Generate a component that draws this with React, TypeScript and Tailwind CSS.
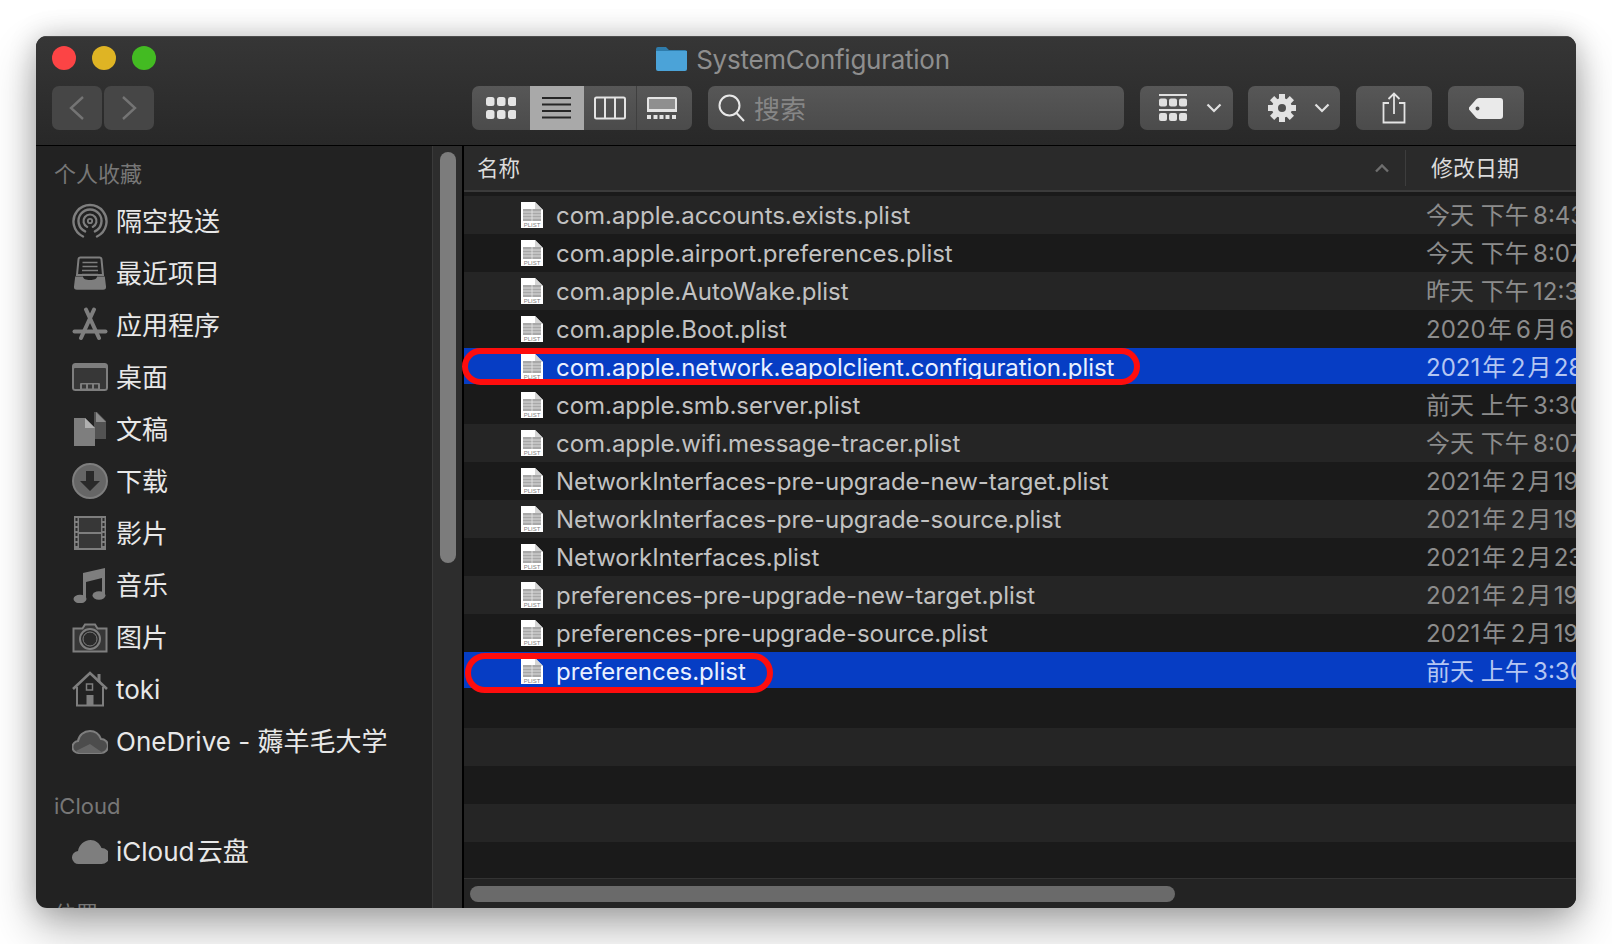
import React from 'react';

const GRAY = '#7e7e7e';

const AirDropIcon = () => (
  <svg width="36" height="36" viewBox="0 0 36 36" fill="none" stroke={GRAY} strokeLinecap="round">
    <path d="M11 33.500A16.500 16.500 0 1 1 25 33.500" strokeWidth="2.400" />
    <path d="M13.100 28.400A11.500 11.500 0 1 1 22.900 28.400" strokeWidth="2.400" />
    <path d="M15.250 23.900A6.500 6.500 0 1 1 20.750 23.900" strokeWidth="2.200" />
    <circle cx="18" cy="18" r="2.200" strokeWidth="1.800" />
  </svg>
);

const RecentsIcon = () => (
  <svg width="36" height="36" viewBox="0 0 36 36" fill="none">
    <path d="M8.500 2.500h19a2 2 0 0 1 2 1.800L31 20H5L6.500 4.300a2 2 0 0 1 2-1.800z" stroke={GRAY} strokeWidth="2" />
    <path d="M10.500 7.500h15M10.500 11.500h15M10 15.500h16M10 19.500h16" stroke={GRAY} strokeWidth="1.600" />
    <path d="M3.200 21.500H11c0 2.500 3 3.500 7 3.500s7-1 7-3.500h7.800l1.200 10a3 3 0 0 1-3 3.300H5a3 3 0 0 1-3-3.300z" fill={GRAY} />
  </svg>
);

const AppsIcon = () => (
  <svg width="36" height="36" viewBox="0 0 36 36" fill="none" stroke={GRAY} strokeLinecap="round">
    <path d="M14 2.500L27 31M22 2.500L9 31" strokeWidth="4" />
    <path d="M2.500 24.500H33.500" strokeWidth="4" />
  </svg>
);

const DesktopIcon = () => (
  <svg width="36" height="36" viewBox="0 0 36 36">
    <rect x="0" y="4" width="36" height="28" rx="3.500" fill={GRAY} />
    <rect x="2" y="9" width="32" height="21" rx="1" fill="#373737" />
    <rect x="8" y="24" width="20" height="7" rx="1" fill={GRAY} />
    <rect x="10" y="25.500" width="4" height="4" fill="#373737" />
    <rect x="16" y="25.500" width="4" height="4" fill="#373737" />
    <rect x="22" y="25.500" width="4" height="4" fill="#373737" />
  </svg>
);

const DocsIcon = () => (
  <svg width="36" height="36" viewBox="0 0 36 36">
    <path d="M12 1h10v27h12V10l-9-9z" fill="#525252" />
    <path d="M24 1l10 10H24z" fill="#8a8a8a" />
    <path d="M2 7h11l10 10v18H2z" fill={GRAY} />
    <path d="M13 7v10h10z" fill="#b0b0b0" />
  </svg>
);

const DownloadIcon = () => (
  <svg width="36" height="36" viewBox="0 0 36 36">
    <circle cx="18" cy="18" r="17" fill="#666666" stroke={GRAY} strokeWidth="2" />
    <path d="M14 8h8v10h6L18 28 8 18h6z" fill="#2a2a2a" />
  </svg>
);

const MoviesIcon = () => (
  <svg width="36" height="36" viewBox="0 0 36 36">
    <rect x="2" y="1" width="32" height="34" fill={GRAY} />
    <rect x="7" y="3" width="22" height="14" fill="#373737" />
    <rect x="7" y="19" width="22" height="14" fill="#373737" />
    {[3, 8, 13, 18, 23, 28].map((y) => (
      <React.Fragment key={y}>
        <rect x="3.500" y={y} width="2" height="3" fill="#2a2a2a" />
        <rect x="30.500" y={y} width="2" height="3" fill="#2a2a2a" />
      </React.Fragment>
    ))}
  </svg>
);

const MusicIcon = () => (
  <svg width="36" height="36" viewBox="0 0 36 36" fill={GRAY}>
    <path d="M11 8.500L33 3v26h-3V11L14 15v18h-3z" />
    <ellipse cx="8" cy="32" rx="6.500" ry="4.200" />
    <ellipse cx="27" cy="28.500" rx="6.500" ry="4.200" />
    <path d="M11 6l22-5v7L11 13z" />
  </svg>
);

const CameraIcon = () => (
  <svg width="36" height="36" viewBox="0 0 36 36" fill="none" stroke={GRAY}>
    <path d="M1.500 9.500h9l2.500-4h10l2.500 4h9v23h-33z" strokeWidth="2" fill="#373737" />
    <circle cx="18" cy="20" r="10" strokeWidth="2" fill="#2a2a2a" />
    <circle cx="18" cy="20" r="7" strokeWidth="1" />
  </svg>
);

const HomeIcon = () => (
  <svg width="36" height="36" viewBox="0 0 36 36" fill="none" stroke={GRAY}>
    <path d="M1 18L18 2l17 16" strokeWidth="2.600" />
    <path d="M5 16v18.500h26V16" strokeWidth="2" />
    <path d="M27 3v8" strokeWidth="3" />
    <rect x="14.500" y="13" width="6" height="6" strokeWidth="1.500" />
    <rect x="14.500" y="24" width="7" height="10" fill={GRAY} stroke="none" />
  </svg>
);

const OneDriveIcon = () => (
  <svg width="36" height="36" viewBox="0 0 36 36">
    <path d="M7 30a6 6 0 0 1-1-12c1-6 6-10 12-10 5 0 9 3 11 8a7 7 0 0 1 0 14z" fill="#4c4c4c" stroke={GRAY} strokeWidth="2" />
    <path d="M4 28l14-7 13 9H7z" fill="#666666" />
  </svg>
);

const CloudIcon = () => (
  <svg width="36" height="36" viewBox="0 0 36 36">
    <path d="M7 31a6.500 6.500 0 0 1-1-13c1-6 6-11 12.500-11 5 0 9 3 11 8a8 8 0 0 1 0 16z" fill={GRAY} />
  </svg>
);

const GearIcon = () => (
  <svg width="30" height="30" viewBox="0 0 30 30" fill="#e2e2e2">
    <circle cx="15" cy="15" r="10" />
    {[0, 45, 90, 135, 180, 225, 270, 315].map((a) => (
      <rect key={a} x="12" y="1" width="6" height="7" transform={`rotate(${a} 15 15)`} />
    ))}
    <circle cx="15" cy="15" r="4" fill="#505050" />
  </svg>
);

const PlistIcon = () => (
  <svg width="22" height="26" viewBox="0 0 22 26" className="shrink-0">
    <path d="M0 0h14l8 8v18H0z" fill="#ffffff" />
    <path d="M14 0l8 8h-8z" fill="#d5d5d5" />
    <rect x="2" y="7" width="18" height="12" fill="#a8a8a8" />
    <path d="M2 10h18M2 13h18M2 16h18M11 7v12" stroke="#e8e8e8" strokeWidth="0.800" />
    <text x="11" y="25" textAnchor="middle" fontSize="6" fill="#808080" fontFamily="Liberation Sans, sans-serif">PLIST</text>
  </svg>
);

const favorites = [
  { label: '隔空投送', icon: <AirDropIcon /> },
  { label: '最近项目', icon: <RecentsIcon /> },
  { label: '应用程序', icon: <AppsIcon /> },
  { label: '桌面', icon: <DesktopIcon /> },
  { label: '文稿', icon: <DocsIcon /> },
  { label: '下载', icon: <DownloadIcon /> },
  { label: '影片', icon: <MoviesIcon /> },
  { label: '音乐', icon: <MusicIcon /> },
  { label: '图片', icon: <CameraIcon /> },
  { label: 'toki', icon: <HomeIcon /> },
  { label: 'OneDrive - 薅羊毛大学', icon: <OneDriveIcon /> },
];

// hair spaces between digits and CJK, the way Finder spaces dates
const files = [
  { name: 'com.apple.accounts.exists.plist', date: '今天 下午\u20098:43' },
  { name: 'com.apple.airport.preferences.plist', date: '今天 下午\u20098:07' },
  { name: 'com.apple.AutoWake.plist', date: '昨天 下午\u200912:30' },
  { name: 'com.apple.Boot.plist', date: '2020\u200a年\u20096\u200a月\u200a6\u200a日' },
  { name: 'com.apple.network.eapolclient.configuration.plist', date: '2021\u200a年\u20092\u200a月\u200a28\u200a日', selected: true },
  { name: 'com.apple.smb.server.plist', date: '前天 上午\u20093:30' },
  { name: 'com.apple.wifi.message-tracer.plist', date: '今天 下午\u20098:07' },
  { name: 'NetworkInterfaces-pre-upgrade-new-target.plist', date: '2021\u200a年\u20092\u200a月\u200a19\u200a日' },
  { name: 'NetworkInterfaces-pre-upgrade-source.plist', date: '2021\u200a年\u20092\u200a月\u200a19\u200a日' },
  { name: 'NetworkInterfaces.plist', date: '2021\u200a年\u20092\u200a月\u200a23\u200a日' },
  { name: 'preferences-pre-upgrade-new-target.plist', date: '2021\u200a年\u20092\u200a月\u200a19\u200a日' },
  { name: 'preferences-pre-upgrade-source.plist', date: '2021\u200a年\u20092\u200a月\u200a19\u200a日' },
  { name: 'preferences.plist', date: '前天 上午\u20093:30', selected: true },
];

const SidebarItem: React.FC<{ label: string; icon: React.ReactNode }> = ({ label, icon }) => (
  <div className="h-[52px] flex items-center pl-[36px] shrink-0">
    <span className="w-[36px] h-[36px] shrink-0">{icon}</span>
    <span className="ml-[8px] text-[26px] text-[#e8e8e8] whitespace-nowrap">{label}</span>
  </div>
);

const FileRow: React.FC<{ name: string; date: string; selected?: boolean; index: number }> = ({ name, date, selected, index }) => {
  const stripe = index % 2 === 0 ? 'bg-[#252525]' : 'bg-[#1a1a1a]';
  return (
    <div className={`relative h-[38px] shrink-0 ${selected ? 'bg-[#1a1a1a]' : stripe}`}>
      <div className={`flex items-center ${selected ? 'h-[36px] pt-[2px] bg-[#063dc4]' : 'h-[38px]'}`}>
        <div className="flex-1 flex items-center pl-[57px] min-w-0">
          <PlistIcon />
          <span className={`ml-[13px] mt-[2px] text-[24px] tracking-[-0.04px] whitespace-nowrap ${selected ? 'text-[#eaf0ff]' : 'text-[#c2c2c2]'}`}>{name}</span>
        </div>
        <div className={`w-[150px] mt-[2px] overflow-hidden whitespace-nowrap text-[24px] ${selected ? 'text-[#b4c6f2]' : 'text-[#8c8c8c]'}`}>{date}</div>
      </div>
      {index === 4 && <div className="absolute z-10 left-[-2px] top-0 w-[678px] h-[37px] rounded-full border-[6px] border-[#fe0d0d]" />}
      {index === 12 && <div className="absolute z-10 left-[1px] top-[1px] w-[308px] h-[40px] rounded-full border-[6px] border-[#fe0d0d]" />}
    </div>
  );
};

const ToolButton: React.FC<{ className: string; children: React.ReactNode }> = ({ className, children }) => (
  <div className={`h-[44px] rounded-[7px] flex items-center justify-center shrink-0 ${className}`}>
    {children}
  </div>
);

const Chevron = () => (
  <svg width="16" height="10" viewBox="0 0 16 10" fill="none" stroke="#e0e0e0" strokeWidth="2.200"><path d="M1.500 1.500L8 8l6.500-6.500" /></svg>
);

export default function App() {
  return (
    <div className="w-[1612px] h-[944px] bg-white pl-[36px] pt-[36px] overflow-hidden font-['Inter','Noto_Sans_CJK_SC',sans-serif]">
      <div className="w-[1540px] h-[872px] rounded-[11px] overflow-hidden flex flex-col bg-[#222222] shadow-[0_20px_45px_rgba(0,0,0,0.3),0_0_28px_rgba(0,0,0,0.2)]">
        {/* toolbar */}
        <div className="h-[110px] shrink-0 bg-gradient-to-b from-[#363636] to-[#282828] border-t border-t-[#4c4c4c] border-b border-b-black flex flex-col">
          <div className="h-[49px] relative flex items-center justify-center pr-[6px] pb-[5px]">
            <div className="absolute left-[16px] top-[9px] flex gap-[16px]">
              <span className="w-[24px] h-[24px] rounded-full bg-[#fc4445]" />
              <span className="w-[24px] h-[24px] rounded-full bg-[#dfb424]" />
              <span className="w-[24px] h-[24px] rounded-full bg-[#43bb22]" />
            </div>
            <svg width="31" height="25" viewBox="0 0 31 25" className="mt-[-2px]">
              <path d="M0 3a2 2 0 0 1 2-2h8l3 3h16a2 2 0 0 1 2 2v3H0z" fill="#2f7cab" />
              <path d="M0 5h31v18a2 2 0 0 1-2 2H2a2 2 0 0 1-2-2z" fill="#4ba3d8" />
            </svg>
            <span className="ml-[9px] text-[26px] tracking-[-0.26px] text-[#8e8e8e]">SystemConfiguration</span>
          </div>
          <div className="h-[44px] flex pl-[16px]">
            <ToolButton className="w-[50px] bg-[#464646]">
              <svg width="16" height="26" viewBox="0 0 16 26" fill="none" stroke="#747474" strokeWidth="2.400"><path d="M14 2L2 13l12 11" /></svg>
            </ToolButton>
            <ToolButton className="w-[50px] ml-[2px] bg-[#464646]">
              <svg width="16" height="26" viewBox="0 0 16 26" fill="none" stroke="#747474" strokeWidth="2.400"><path d="M2 2l12 11L2 24" /></svg>
            </ToolButton>
            <div className="ml-[318px] w-[220px] h-[44px] rounded-[7px] overflow-hidden flex bg-gradient-to-b from-[#575757] to-[#4b4b4b] shrink-0">
              <div className="w-[58px] flex items-center justify-center">
                <svg width="30" height="24" viewBox="0 0 30 24" fill="#e4e4e4">
                  {[0, 11, 22].map((x) => (
                    <React.Fragment key={x}>
                      <rect x={x} y="1" width="8.500" height="9" rx="2.500" />
                      <rect x={x} y="14" width="8.500" height="9" rx="2.500" />
                    </React.Fragment>
                  ))}
                </svg>
              </div>
              <div className="w-[54px] bg-[#a9a9a9] flex items-center justify-center">
                <svg width="30" height="24" viewBox="0 0 30 24" fill="#262626">
                  <rect y="1" width="29" height="2" />
                  <rect y="7.500" width="29" height="2" />
                  <rect y="14" width="29" height="2" />
                  <rect y="20.500" width="29" height="2" />
                </svg>
              </div>
              <div className="w-[53px] border-r border-[#3f3f3f] flex items-center justify-center">
                <svg width="32" height="24" viewBox="0 0 32 24" fill="none" stroke="#e4e4e4" strokeWidth="2"><rect x="1" y="1.500" width="30" height="21" rx="1.500" /><path d="M11 2v20M21 2v20" /></svg>
              </div>
              <div className="flex-1 flex items-center justify-center pr-[5px]">
                <svg width="30" height="24" viewBox="0 0 30 24" fill="#e4e4e4">
                  <path d="M1.500 1h27a1.500 1.500 0 0 1 1.500 1.500V16H0V2.500A1.500 1.500 0 0 1 1.500 1z" />
                  <rect x="2" y="3" width="26" height="10" fill="#8f8f8f" />
                  {[0, 6.500, 12.500, 18.500, 25].map((x) => (<rect key={x} x={x} y="19" width="4" height="4" />))}
                </svg>
              </div>
            </div>
            <div className="ml-[16px] w-[416px] h-[44px] rounded-[7px] bg-gradient-to-b from-[#575757] to-[#4b4b4b] flex items-center pl-[10px] shrink-0">
              <svg width="27" height="28" viewBox="0 0 27 28" fill="none" stroke="#e8e8e8" strokeWidth="2"><circle cx="11.500" cy="11.500" r="10" /><path d="M18.500 19l7.500 8" /></svg>
              <span className="ml-[9px] mt-[2px] text-[26px] text-[#868686]">搜索</span>
            </div>
            <ToolButton className="w-[93px] ml-[16px] pl-[6px] bg-gradient-to-b from-[#575757] to-[#4b4b4b]">
              <svg width="32" height="28" viewBox="0 0 32 28" fill="#e0e0e0">
                <rect x="2" y="0" width="28" height="2" />
                <rect x="2" y="15" width="28" height="2" />
                {[2, 12, 22].map((x) => (
                  <React.Fragment key={x}>
                    <rect x={x} y="4.500" width="8" height="8" rx="2" />
                    <rect x={x} y="19" width="8" height="8" rx="2" />
                  </React.Fragment>
                ))}
              </svg>
              <span className="ml-[17px]"><Chevron /></span>
            </ToolButton>
            <ToolButton className="w-[92px] ml-[15px] pl-[8px] bg-gradient-to-b from-[#575757] to-[#4b4b4b]">
              <GearIcon />
              <span className="ml-[17px]"><Chevron /></span>
            </ToolButton>
            <ToolButton className="w-[76px] ml-[16px] bg-gradient-to-b from-[#575757] to-[#4b4b4b]">
              <svg width="24" height="32" viewBox="0 0 24 32" fill="none" stroke="#e4e4e4" strokeWidth="1.800"><path d="M7 11H1.500v19.500h21V11H17" /><path d="M12 22V2M6.500 7L12 1.500 17.500 7" /></svg>
            </ToolButton>
            <ToolButton className="w-[76px] ml-[16px] bg-gradient-to-b from-[#575757] to-[#4b4b4b]">
              <svg width="34" height="21" viewBox="0 0 34 21"><path fillRule="evenodd" fill="#eaeaea" d="M10 0h21a3 3 0 0 1 3 3v15a3 3 0 0 1-3 3H10a4 4 0 0 1-3-1.500L0 11.500a2 2 0 0 1 0-2L7 1.500A4 4 0 0 1 10 0zM8.500 8.500a2 2 0 1 0 0 4 2 2 0 0 0 0-4z" /></svg>
            </ToolButton>
          </div>
        </div>

        <div className="flex-1 min-h-0 flex">
          {/* sidebar */}
          <div className="w-[396px] shrink-0 overflow-hidden flex flex-col">
            <div className="mt-[14px] mb-[7px] ml-[18px] h-[28px] shrink-0 flex items-center text-[22px] text-[#777777]">个人收藏</div>
            {favorites.map((item) => (
              <SidebarItem key={item.label} label={item.label} icon={item.icon} />
            ))}
            <div className="mt-[25px] mb-[5px] ml-[18px] h-[28px] shrink-0 flex items-center text-[22px] text-[#777777]">iCloud</div>
            <SidebarItem label={'iCloud\u200a云盘'} icon={<CloudIcon />} />
            <div className="mt-[23px] ml-[18px] h-[28px] shrink-0 flex items-center text-[22px] text-[#777777]">位置</div>
          </div>
          <div className="w-[30px] shrink-0 bg-[#2d2d2d] border-l border-[#3a3a3a] pl-[7px] pt-[6px]">
            <div className="w-[16px] h-[411px] rounded-full bg-[#7c7c7c]" />
          </div>
          <div className="w-[2px] shrink-0 bg-black" />

          {/* file list */}
          <div className="flex-1 min-w-0 flex flex-col">
            <div className="h-[46px] shrink-0 flex items-center bg-[#2a2a2a] border-b-2 border-[#3b3b3b]">
              <span className="ml-[13px] text-[21.500px] text-[#dcdcdc]">名称</span>
              <svg width="16" height="10" viewBox="0 0 16 10" fill="none" stroke="#6e6e6e" strokeWidth="2.400" className="ml-auto"><path d="M2 8.500L8 2.500l6 6" /></svg>
              <span className="ml-[15px] w-px h-[36px] bg-[#3d3d3d]" />
              <span className="ml-[25px] w-[145px] text-[22px] text-[#dcdcdc] whitespace-nowrap">修改日期</span>
            </div>
            <div className="h-[4px] shrink-0 bg-[#1a1a1a]" />
            {files.map((f, i) => (
              <FileRow key={f.name} index={i} name={f.name} date={f.date} selected={f.selected} />
            ))}
            {[13, 14, 15, 16].map((i) => (
              <div key={i} className={`h-[38px] shrink-0 ${i % 2 === 0 ? 'bg-[#252525]' : 'bg-[#1a1a1a]'}`} />
            ))}
            <div className="flex-1 min-h-0 bg-[#1a1a1a]" />
            <div className="h-[30px] shrink-0 bg-[#232323] border-t border-[#333333] pt-[7px] pl-[6px]">
              <div className="w-[705px] h-[16px] rounded-full bg-[#6a6a6a]" />
            </div>
          </div>
        </div>
      </div>
    </div>
  );
}
